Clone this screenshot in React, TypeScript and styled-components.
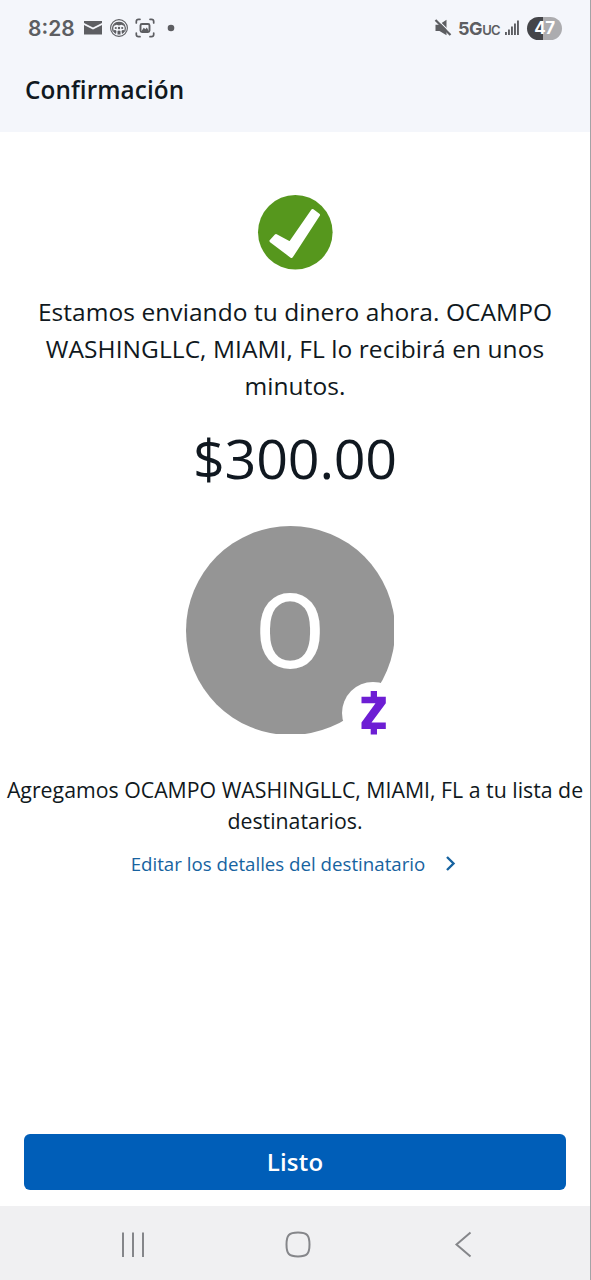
import styled, { createGlobalStyle } from "styled-components";

const GlobalStyle = createGlobalStyle`
  * { box-sizing: border-box; }
  body {
    margin: 0;
    background: #fff;
    font-family: "Open Sans", "Noto Sans", sans-serif;
    color: #101820;
  }
`;

const Screen = styled.div`
  display: flex;
  flex-direction: column;
  width: 591px;
  height: 1280px;
  overflow: hidden;
  border-right: 1px solid #a3a3a6;
`;

const Header = styled.header`
  height: 132px;
  background: #f4f6fb;
`;

const StatusBar = styled.div`
  display: flex;
  justify-content: space-between;
  height: 56px;
  padding: 0 28px;
  color: #5d5e62;
  font-family: Inter, Roboto, sans-serif;
`;

const StatusGroup = styled.div`
  display: flex;
  align-items: center;
`;

const Clock = styled.span`
  width: 55px;
  font-size: 21px;
  font-weight: 600;
`;

const Network = styled.span`
  margin-left: 6px;
  width: 46px;
  font-size: 18px;
  font-weight: 700;
  letter-spacing: -0.4px;
  white-space: nowrap;
  small {
    font-size: 13px;
    font-weight: 600;
    letter-spacing: -0.9px;
  }
`;

const Battery = styled.div`
  width: 35px;
  height: 23px;
  margin-left: 7px;
  border-radius: 12px;
  background: linear-gradient(90deg, #444549 47%, #acacaf 47%);
  color: #fff;
  font-size: 17px;
  font-weight: 700;
  line-height: 23px;
  text-align: center;
  letter-spacing: -0.5px;
`;

const Title = styled.h1`
  margin: 17px 0 0 25px;
  font-size: 24.3px;
  font-weight: 600;
  line-height: 34px;
  letter-spacing: 0.1px;
`;

const Content = styled.main`
  flex: 1;
  display: flex;
  flex-direction: column;
  align-items: center;
  text-align: center;
`;

const SuccessIcon = styled.svg`
  width: 76px;
  height: 76px;
  margin-top: 62px;
`;

const Message = styled.p`
  margin: 23px 0 0;
  font-size: 24.5px;
  line-height: 37px;
  letter-spacing: 0.06px;
  white-space: nowrap;
`;

const Amount = styled.div`
  margin-top: 14px;
  font-size: 55.6px;
  line-height: 80px;
  letter-spacing: -0.2px;
`;

const Avatar = styled.div`
  width: 208px;
  height: 208px;
  overflow: hidden;
`;

const Initial = styled.div`
  width: 209px;
  height: 209px;
  border-radius: 50%;
  background: #959595;
  color: #fff;
  font-family: Roboto, sans-serif;
  font-size: 104px;
  line-height: 213px;
  text-align: center;
`;

const AvatarRow = styled.div`
  position: relative;
  margin: 28px 11px 0 0;
`;

const ZelleBadge = styled.svg`
  position: absolute;
  left: 156px;
  top: 156px;
  width: 62px;
  height: 62px;
`;

const Note = styled.p`
  margin: 40px 0 0;
  font-size: 21.3px;
  line-height: 31px;
  white-space: nowrap;
`;

const EditLink = styled.a`
  display: flex;
  align-items: center;
  gap: 20px;
  margin: 14px 2px 0 0;
  color: #1763a0;
  font-size: 18.7px;
  line-height: 28px;
`;

const Footer = styled.div`
  padding: 0 24px 16px;
`;

const DoneButton = styled.button`
  display: block;
  width: 100%;
  height: 56px;
  padding: 0 0 2px;
  border: 0;
  border-radius: 6px;
  background: #005eb8;
  color: #fff;
  font: 600 24px "Open Sans", sans-serif;
  letter-spacing: 0.2px;
`;

const NavBar = styled.nav`
  display: flex;
  align-items: center;
  justify-content: space-between;
  height: 74px;
  padding: 3px 117px 0 119px;
  background: #f0f0f2;
`;

const HomeIcon = styled.svg`
  margin-right: 4px;
`;

const MailIcon = () => (
  <svg width="20" height="16" viewBox="0 0 20 16">
    <path d="M1 1h18v2L10 7.5 1 3z" fill="currentColor" />
    <path d="M1 5l9 4.6L19 5v9.5H1z" fill="currentColor" />
  </svg>
);

const PeopleIcon = () => (
  <svg width="20" height="20" viewBox="0 0 20 20" fill="none" stroke="currentColor">
    <circle cx="10" cy="10" r="8.4" strokeWidth="1.1" />
    <path d="M4.2 13.5C2.5 8.5 5 4.3 10 4.3s7.5 4.2 5.8 9.2" strokeWidth="1.2" />
    <g fill="currentColor" stroke="none">
      <path d="M4.8 8Q6 4 10 4t5.2 4l-2.7-1.3L10 7.5l-2.5-.8z" />
      <circle cx="6.8" cy="10" r="1.1" />
      <circle cx="13.2" cy="10" r="1.1" />
      <circle cx="10" cy="10" r="1.2" />
      <path d="M4 13q2.2-1.8 3.5 0L7 16q-2-.8-3-3zM16 13q-2.2-1.8-3.5 0L13 16q2-.8 3-3zM8.500 13q1.500-1.200 3 0v3.500h-3z" />
    </g>
  </svg>
);

const CaptureIcon = () => (
  <svg width="20" height="20" viewBox="0 0 20 20" fill="none" stroke="currentColor" strokeWidth="1.7" strokeLinecap="round">
    <path d="M1.3 5V3.5q0-2.2 2.2-2.2H5M15 1.3h1.5q2.2 0 2.2 2.2V5M18.7 15v1.5q0 2.2-2.2 2.2H15M5 18.7H3.5q-2.2 0-2.2-2.2V15" />
    <rect x="5.5" y="6" width="9" height="8" rx="1.5" strokeWidth="1.9" />
    <path d="M6.5 13l2.3-3.2 1.5 1.5 1.5-1.8 2 3.5z" fill="currentColor" stroke="none" />
  </svg>
);

const MuteIcon = () => (
  <svg width="18" height="18" viewBox="0 0 18 18">
    <path d="M1.5 5.8H5L12.500.8v15.400L5.500 12h-4z" fill="currentColor" />
    <path d="M3.300.4L18.500 15.600" stroke="#f4f6fb" strokeWidth="1.2" />
    <path d="M1.500 1L16.500 16" stroke="currentColor" strokeWidth="2.2" />
  </svg>
);

const SignalIcon = () => (
  <svg width="16" height="16" viewBox="0 0 16 16" fill="currentColor">
    <path d="M1 12h1.900v3H1zM4 9.500h1.900V15H4zM7 6.500h1.900V15H7zM10 3.500h1.900V15H10zM13 .5h1.900V15H13z" />
  </svg>
);

const message = ["Estamos enviando tu dinero ahora. OCAMPO", "WASHINGLLC, MIAMI, FL lo recibirá en unos", "minutos."];

export default function App() {
  return (
    <Screen>
      <GlobalStyle />
      <Header>
        <StatusBar>
          <StatusGroup>
            <Clock>8:28</Clock>
            <MailIcon />
            <svg width="6" height="1" />
            <PeopleIcon />
            <svg width="6" height="1" />
            <CaptureIcon />
            <svg width="32" height="8" viewBox="0 0 32 8">
              <circle cx="16" cy="4" r="3.3" fill="currentColor" />
            </svg>
          </StatusGroup>
          <StatusGroup>
            <MuteIcon />
            <Network>5G<small>UC</small></Network>
            <SignalIcon />
            <Battery>47</Battery>
          </StatusGroup>
        </StatusBar>
        <Title>Confirmación</Title>
      </Header>
      <Content>
        <SuccessIcon viewBox="0 0 76 76">
          <circle cx="38.3" cy="38.3" r="37.3" fill="#56971d" />
          <path d="M14 47l5-5.500 14 7.500L55.500 16.500l6 4.500L34.500 62.500z" fill="#fff" stroke="#fff" strokeWidth="3" strokeLinejoin="round" />
        </SuccessIcon>
        <Message>
          {message.map((line) => <div key={line}>{line}</div>)}
        </Message>
        <Amount>$300.00</Amount>
        <AvatarRow>
          <Avatar>
            <Initial>O</Initial>
          </Avatar>
          <ZelleBadge viewBox="0 0 62 62">
            <circle cx="31" cy="31" r="31" fill="#fff" />
            <path d="M28.700 9H35v5.700h8.800v6.500L29.500 40.500h14.300V47H35v5.500h-6.300V47h-9.200v-6.500L33.500 21.200h-14v-6.500h9.200z" fill="#6d1ed4" />
          </ZelleBadge>
        </AvatarRow>
        <Note>
          Agregamos OCAMPO WASHINGLLC, MIAMI, FL a tu lista de<br />
          destinatarios.
        </Note>
        <EditLink>
          Editar los detalles del destinatario
          <svg width="12" height="16" viewBox="0 0 12 16" fill="none" stroke="currentColor" strokeWidth="2.4">
            <path d="M2 1L8.500 7.500 2 14" />
          </svg>
        </EditLink>
      </Content>
      <Footer>
        <DoneButton>Listo</DoneButton>
      </Footer>
      <NavBar>
        <svg width="28" height="28" viewBox="0 0 28 28" stroke="#85868a" strokeWidth="2">
          <path d="M4 1.500V26M14 1.500V26M24 1.500V26" />
        </svg>
        <HomeIcon width="28" height="28" viewBox="0 0 28 28" fill="none" stroke="#85868a" strokeWidth="2">
          <path d="M14 1.500C5 1.500 2.500 4 2.500 13.500S5 25.500 14 25.500s11.500-2.500 11.500-12S23 1.500 14 1.500z" />
        </HomeIcon>
        <svg width="20" height="28" viewBox="0 0 20 28" fill="none" stroke="#85868a" strokeWidth="2">
          <path d="M17.500 1.500L3.500 13.500l14 12" />
        </svg>
      </NavBar>
    </Screen>
  );
}
